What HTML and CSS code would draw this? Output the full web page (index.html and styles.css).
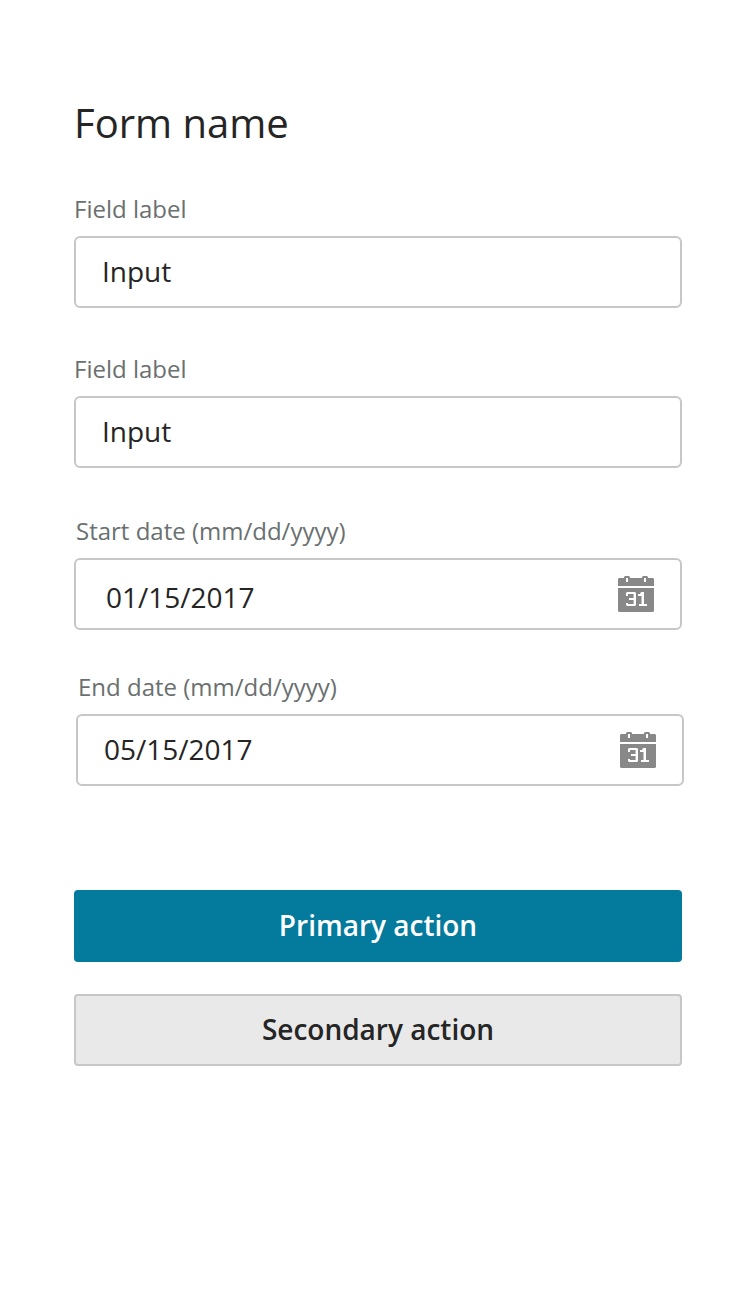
FILE: index.html
```html
<!DOCTYPE html>
<html lang="en">
<head>
<meta charset="utf-8">
<title>Form name</title>
<link rel="stylesheet" href="styles.css">
</head>
<body>
<svg class="defs" width="0" height="0" aria-hidden="true">
  <symbol id="calendar" viewBox="0 0 36 36">
    <path fill="#888" d="M0 3L1 2H6V1L7 0H11L12 1V2H24V1L25 0H29L30 1V2H35L36 3V10H0ZM0 12H36V35L35 36H1L0 35Z"/>
    <path fill="#fff" d="M8 2H10V6H8ZM26 2H28V6H26Z"/>
    <path fill="#fff" d="M9 16H17L18 17V29L17 30H9L8 29V27H10V28H15.6V24H11V22H15.6V18H10V20H8V17ZM23 16H26V28H29V30H21V28H23.5V20H20V18H22Z"/>
  </symbol>
</svg>
<form class="form">
  <h1 class="title">Form name</h1>
  <div class="field">
    <label class="label">Field label</label>
    <div class="control"><span>Input</span></div>
  </div>
  <div class="field">
    <label class="label">Field label</label>
    <div class="control"><span>Input</span></div>
  </div>
  <div class="field field-start">
    <label class="label">Start date (mm/dd/yyyy)</label>
    <div class="control"><span>01/15/2017</span><svg class="icon"><use href="#calendar"/></svg></div>
  </div>
  <div class="field field-end">
    <label class="label">End date (mm/dd/yyyy)</label>
    <div class="control"><span>05/15/2017</span><svg class="icon"><use href="#calendar"/></svg></div>
  </div>
  <div class="actions">
    <button type="button" class="button primary">Primary action</button>
    <button type="button" class="button secondary">Secondary action</button>
  </div>
</form>
</body>
</html>
```
FILE: styles.css
```css
* { box-sizing: border-box; }
body { margin: 0; background: #fff; color: #252525; font-family: "Open Sans", "Noto Sans", sans-serif; }
.defs { display: none; }
.form { width: 608px; margin-left: 74px; padding-top: 96px; }
.title { margin: 0; font-size: 40px; font-weight: 400; line-height: 54px; height: 100px; }
.field { height: 160px; }
.label { display: block; height: 40px; font-size: 24px; line-height: 26px; color: #6a7070; white-space: nowrap; }
.control { display: flex; align-items: center; justify-content: space-between; height: 72px; padding: 0 26px; border: 2px solid #c7c7c7; border-radius: 6px; font-size: 28px; line-height: 38px; }
.control span { padding-bottom: 2px; }
.icon { width: 36px; height: 36px; }
.field-start { height: 158px; padding-top: 2px; }
.field-start .label { padding-left: 2px; }
.field-start .control { padding-left: 30px; }
.field-start .control span { padding-top: 8px; }
.field-end { height: 112px; margin-left: 2px; margin-right: -2px; }
.field-end .label { padding-left: 2px; }
.actions { display: flex; flex-direction: column; gap: 32px; padding-top: 104px; }
.button { height: 72px; padding: 0 0 2px; border: 0; border-radius: 4px; font: 600 28px/38px "Open Sans", "Noto Sans", sans-serif; }
.primary { background: #047a9c; color: #fff; }
.secondary { background: #e9e9e9; color: #252525; border: 2px solid #c7c7c7; }
```
